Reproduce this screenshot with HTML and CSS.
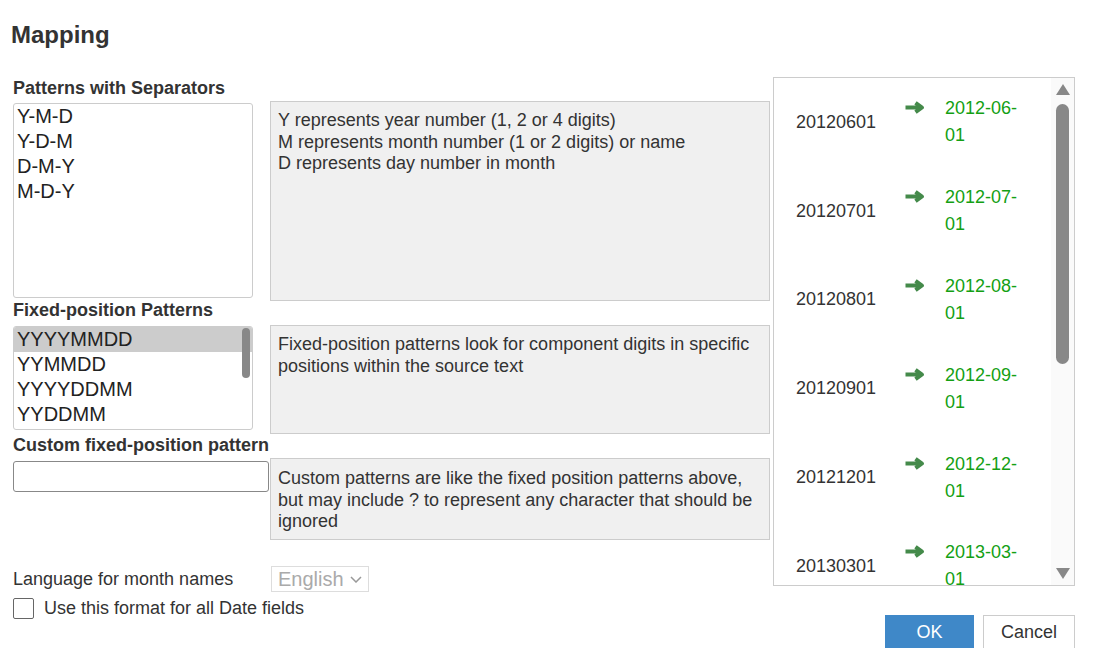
FILE: index.html
```html
<!DOCTYPE html>
<html lang="en">
<head>
<meta charset="UTF-8">
<meta name="viewport" content="width=device-width, initial-scale=1.0">
<title>Mapping</title>
<link rel="stylesheet" href="styles.css">
</head>
<body>
<div class="dialog">
  <h1 class="title">Mapping</h1>
  <div class="main">
    <div class="form">
      <div class="row row-sep">
        <div class="field">
          <div class="label">Patterns with Separators</div>
          <div class="listbox listbox-sep">
            <div class="option">Y-M-D</div>
            <div class="option">Y-D-M</div>
            <div class="option">D-M-Y</div>
            <div class="option">M-D-Y</div>
          </div>
        </div>
        <div class="hint hint-sep">Y represents year number (1, 2 or 4 digits)<br>M represents month number (1 or 2 digits) or name<br>D represents day number in month</div>
      </div>

      <div class="row row-fixed">
        <div class="field">
          <div class="label">Fixed-position Patterns</div>
          <div class="listbox listbox-fixed">
            <div class="option selected">YYYYMMDD</div>
            <div class="option">YYMMDD</div>
            <div class="option">YYYYDDMM</div>
            <div class="option">YYDDMM</div>
            <span class="list-thumb"></span>
          </div>
        </div>
        <div class="hint hint-fixed">Fixed-position patterns look for component digits in specific positions within the source text</div>
      </div>

      <div class="row row-custom">
        <div class="field">
          <div class="label">Custom fixed-position pattern</div>
          <input type="text" class="text-input">
        </div>
        <div class="hint hint-custom">Custom patterns are like the fixed position patterns above, but may include ? to represent any character that should be ignored</div>
      </div>

      <div class="lang-row">
        <span class="lang-label">Language for month names</span>
        <div class="select">
          <span>English</span>
          <svg width="12" height="7" viewBox="0 0 12 7"><path d="M1 1l5 5 5-5" fill="none" stroke="#999" stroke-width="1.5"/></svg>
        </div>
      </div>
      <div class="check-row">
        <span class="checkbox"></span>
        <span>Use this format for all Date fields</span>
      </div>
    </div>

    <div class="side">
      <div class="preview">
        <div class="preview-list">
          <div class="map-row">
            <span class="src">20120601</span>
            <svg class="arrow" viewBox="0 0 20 13"><path d="M0.5 6.5H16M10.5 1.8L17 6.5L10.5 11.2" fill="none" stroke="#448a4a" stroke-width="4" stroke-linejoin="round"/></svg>
            <span class="dst">2012-06-01</span>
          </div>
          <div class="map-row">
            <span class="src">20120701</span>
            <svg class="arrow" viewBox="0 0 20 13"><path d="M0.5 6.5H16M10.5 1.8L17 6.5L10.5 11.2" fill="none" stroke="#448a4a" stroke-width="4" stroke-linejoin="round"/></svg>
            <span class="dst">2012-07-01</span>
          </div>
          <div class="map-row">
            <span class="src">20120801</span>
            <svg class="arrow" viewBox="0 0 20 13"><path d="M0.5 6.5H16M10.5 1.8L17 6.5L10.5 11.2" fill="none" stroke="#448a4a" stroke-width="4" stroke-linejoin="round"/></svg>
            <span class="dst">2012-08-01</span>
          </div>
          <div class="map-row">
            <span class="src">20120901</span>
            <svg class="arrow" viewBox="0 0 20 13"><path d="M0.5 6.5H16M10.5 1.8L17 6.5L10.5 11.2" fill="none" stroke="#448a4a" stroke-width="4" stroke-linejoin="round"/></svg>
            <span class="dst">2012-09-01</span>
          </div>
          <div class="map-row">
            <span class="src">20121201</span>
            <svg class="arrow" viewBox="0 0 20 13"><path d="M0.5 6.5H16M10.5 1.8L17 6.5L10.5 11.2" fill="none" stroke="#448a4a" stroke-width="4" stroke-linejoin="round"/></svg>
            <span class="dst">2012-12-01</span>
          </div>
          <div class="map-row">
            <span class="src">20130301</span>
            <svg class="arrow" viewBox="0 0 20 13"><path d="M0.5 6.5H16M10.5 1.8L17 6.5L10.5 11.2" fill="none" stroke="#448a4a" stroke-width="4" stroke-linejoin="round"/></svg>
            <span class="dst">2013-03-01</span>
          </div>
        </div>
        <div class="vscroll">
          <span class="arrow-up"></span>
          <span class="thumb"></span>
          <span class="arrow-down"></span>
        </div>
      </div>
      <div class="buttons">
        <button class="btn btn-ok">OK</button>
        <button class="btn btn-cancel">Cancel</button>
      </div>
    </div>
  </div>
</div>
</body>
</html>
```

FILE: styles.css
```css
html, body {
  margin: 0;
  padding: 0;
  height: 100%;
  overflow: hidden;
  background: #fff;
}
body {
  font-family: "Liberation Sans", Arial, sans-serif;
  color: #333;
}
.dialog {
  padding: 21px 0 0 13px;
}
.title {
  font-size: 24px;
  font-weight: bold;
  line-height: 28px;
  margin: 0 0 28px -2px;
}
.main {
  display: flex;
  gap: 3px;
}
.form {
  width: 757px;
}
.row {
  display: grid;
  grid-template-columns: 257px 500px;
  align-items: start;
}
.row-sep {
  height: 223px;
}
.row-fixed {
  height: 135px;
}
.row-custom {
  height: 105px;
}
.label {
  font-size: 18px;
  font-weight: bold;
  line-height: 21px;
}
.row-sep .label {
  margin-top: 1px;
}
.listbox {
  position: relative;
  box-sizing: border-box;
  width: 240px;
  border: 1px solid #ccc;
  border-radius: 3px;
  font-size: 20px;
  line-height: 25px;
  color: #222;
  overflow: hidden;
}
.listbox-sep {
  height: 195px;
  margin-top: 4px;
}
.listbox-fixed {
  height: 104px;
  margin-top: 5px;
}
.option {
  padding-left: 3px;
  white-space: nowrap;
}
.option.selected {
  background: #ccc;
}
.list-thumb {
  position: absolute;
  top: 1px;
  right: 2px;
  width: 8px;
  height: 50px;
  border-radius: 4px;
  background: #888;
}
.hint {
  box-sizing: border-box;
  background: #f0f0f0;
  border: 1px solid #ccc;
  padding: 8px 7px 6px;
  font-size: 18px;
  line-height: 21.5px;
  color: #333;
}
.hint-sep {
  margin-top: 24px;
  height: 200px;
}
.hint-fixed {
  margin-top: 25px;
  height: 109px;
}
.hint-custom {
  margin-top: 23px;
  height: 82px;
  padding-top: 9px;
}
.text-input {
  display: block;
  box-sizing: border-box;
  width: 256px;
  height: 31px;
  margin: 5px 0 0;
  border: 1px solid #888;
  border-radius: 3px;
  background: #fff;
}
.lang-row {
  display: grid;
  grid-template-columns: 258px auto;
  align-items: center;
  height: 26px;
  margin-top: 26px;
}
.lang-label {
  font-size: 18px;
  line-height: 21px;
}
.select {
  box-sizing: border-box;
  width: 98px;
  height: 26px;
  border: 1px solid #ddd;
  padding: 0 6px;
  display: flex;
  align-items: center;
  justify-content: space-between;
  font-size: 20px;
  color: #aaa;
}
.check-row {
  display: flex;
  align-items: center;
  gap: 10px;
  margin-top: 6px;
  font-size: 18px;
  line-height: 21px;
}
.checkbox {
  box-sizing: border-box;
  width: 21px;
  height: 21px;
  border: 1.5px solid #666;
  border-radius: 2px;
}
.side {
  width: 302px;
}
.preview {
  box-sizing: border-box;
  height: 509px;
  border: 1px solid #ccc;
  display: flex;
  overflow: hidden;
}
.preview-list {
  flex: 1;
  overflow: hidden;
}
.map-row {
  display: flex;
  align-items: flex-start;
  padding: 17.4px 0 17.4px 22px;
  font-size: 18px;
  line-height: 27px;
}
.src {
  width: 109px;
  align-self: center;
  color: #333;
}
.arrow {
  flex: none;
  width: 20px;
  height: 13px;
  margin: 6px 20px 0 0;
}
.dst {
  width: 78px;
  color: #13a013;
  overflow-wrap: anywhere;
}
.vscroll {
  box-sizing: border-box;
  width: 23px;
  padding: 6px 0;
  background: #fafafa;
  display: flex;
  flex-direction: column;
  align-items: center;
}
.arrow-up {
  width: 0;
  height: 0;
  border-left: 7px solid transparent;
  border-right: 7px solid transparent;
  border-bottom: 11px solid #888;
}
.thumb {
  width: 13px;
  height: 260px;
  margin-top: 9px;
  border-radius: 6.5px;
  background: #888;
}
.arrow-down {
  width: 0;
  height: 0;
  margin-top: auto;
  border-left: 7px solid transparent;
  border-right: 7px solid transparent;
  border-top: 11px solid #888;
}
.buttons {
  display: flex;
  justify-content: flex-end;
  gap: 9px;
  margin-top: 29px;
}
.btn {
  height: 34px;
  padding: 0;
  font-family: inherit;
  font-size: 18px;
  border: 1px solid #ccc;
  background: #fff;
  color: #333;
}
.btn-ok {
  width: 89px;
  background: #3f88c8;
  border-color: #3f88c8;
  color: #fff;
}
.btn-cancel {
  width: 92px;
}
```
